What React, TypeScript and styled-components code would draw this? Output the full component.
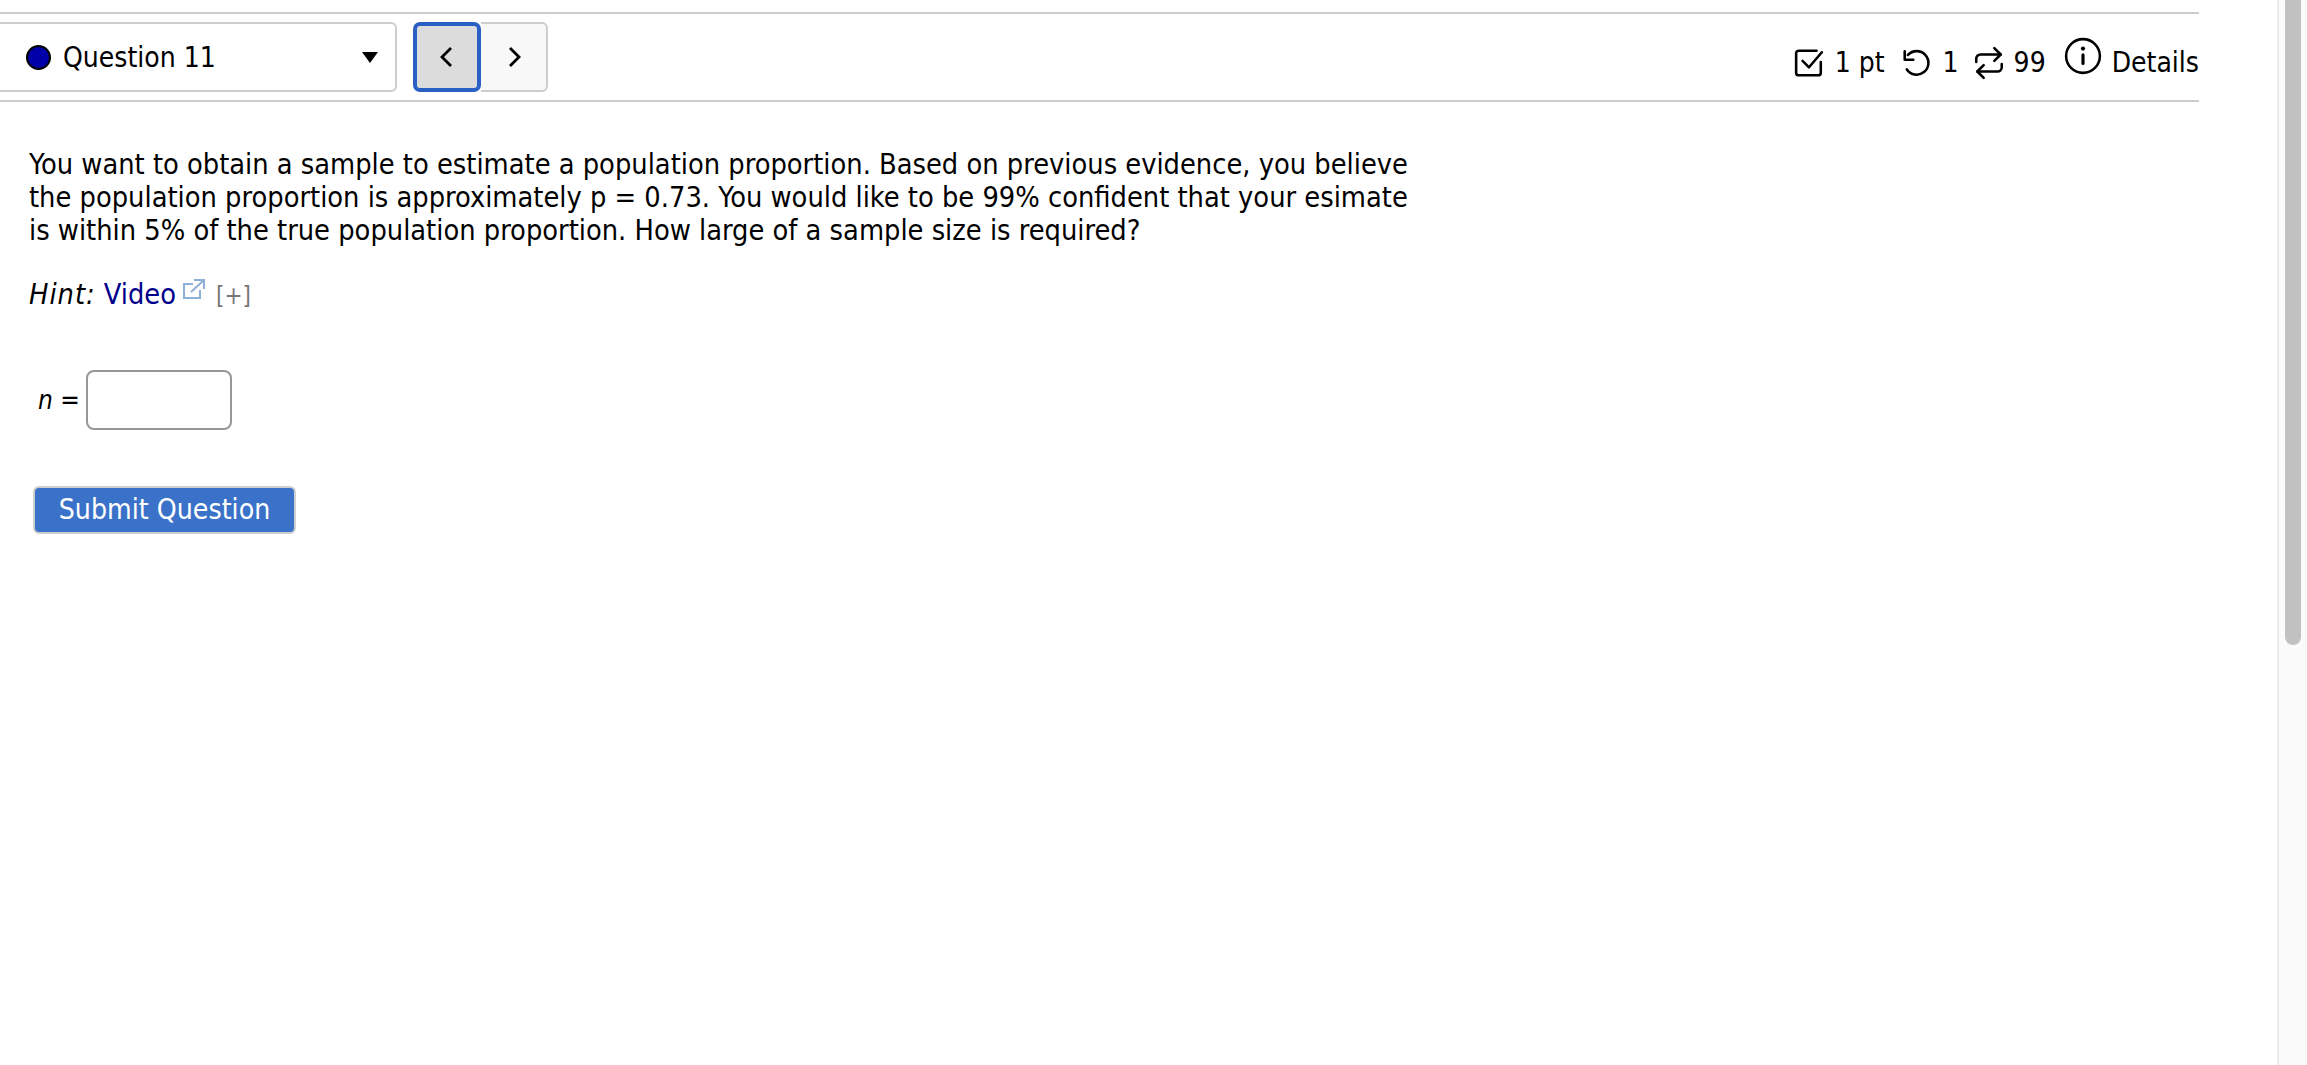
import React from 'react'
import styled, { createGlobalStyle } from 'styled-components'

const GlobalStyle = createGlobalStyle`
  html, body {
    margin: 0;
    padding: 0;
    background: #fff;
    overflow: hidden;
  }
  body {
    font-family: "DejaVu Sans Condensed", "DejaVu Sans", sans-serif;
    color: #000;
  }
`

const Page = styled.div`
  display: flex;
  height: 1065px;
  width: 2307px;
`

const Main = styled.main`
  width: 2199px;
  padding-top: 12px;
  box-sizing: border-box;
`

const Gutter = styled.div`
  flex: 1;
`

const Scrollbar = styled.div`
  width: 30px;
  height: 100%;
  box-sizing: border-box;
  background: #fafafa;
  border-left: 2px solid #eaeaea;
  padding: 0 6px 0 6px;
`

const ScrollThumb = styled.div`
  height: 645px;
  background: #c1c1c1;
  border-radius: 0 0 8px 8px;
`

const Toolbar = styled.div`
  display: flex;
  align-items: center;
  justify-content: space-between;
  height: 90px;
  box-sizing: border-box;
  border-top: 2px solid #cdcdcd;
  border-bottom: 2px solid #cdcdcd;
`

const NavGroup = styled.div`
  display: flex;
  align-items: center;
`

const QuestionSelect = styled.div`
  display: flex;
  align-items: center;
  width: 398px;
  height: 70px;
  box-sizing: border-box;
  margin-left: -1px;
  padding: 0 17px 0 27px;
  background: #fff;
  border: 2px solid #cdcdcd;
  border-left: none;
  border-radius: 0 6px 6px 0;
  font-size: 28px;
`

const StatusDot = styled.span`
  width: 25px;
  height: 25px;
  box-sizing: border-box;
  border-radius: 50%;
  background: #0000a8;
  border: 2px solid #000;
  margin-right: 12px;
`

const SelectLabel = styled.span`
  flex: 1;
  padding-top: 1px;
`

const Caret = styled.span`
  width: 0;
  height: 0;
  border-left: 8px solid transparent;
  border-right: 8px solid transparent;
  border-top: 11px solid #000;
`

const NavButton = styled.button<{ $active?: boolean }>`
  display: flex;
  align-items: center;
  justify-content: center;
  height: 70px;
  padding: 0;
  width: ${p => (p.$active ? '68px' : '67px')};
  margin-left: ${p => (p.$active ? '16px' : '0')};
  box-sizing: border-box;
  background: ${p => (p.$active ? '#dcdcdc' : '#f8f8f8')};
  border: ${p => (p.$active ? '4px solid #2a5fc4' : '2px solid #cdcdcd')};
  border-left-width: ${p => (p.$active ? '4px' : '0')};
  border-radius: ${p => (p.$active ? '7px' : '0 6px 6px 0')};
`

const Meta = styled.div`
  display: flex;
  align-items: center;
  font-size: 28px;
  padding-top: 11px;
`

const MetaItem = styled.span<{ $gap: number; $iconGap: number }>`
  display: flex;
  align-items: center;
  gap: ${p => p.$iconGap}px;
  margin-left: ${p => p.$gap}px;
`

const DetailsIcon = styled.svg`
  margin-top: -14px;
`

const Content = styled.div`
  padding: 46px 0 0 29px;
  font-size: 28.7px;
  line-height: 33px;
`

const Prompt = styled.p`
  margin: 0;
  width: 1390px;
`

const Hint = styled.p`
  margin: 31px 0 0;
  display: flex;
  align-items: baseline;
`

const HintLabel = styled.em`
  margin-right: 8px;
  letter-spacing: 1px;
`

const VideoLink = styled.a`
  color: #00008b;
  text-decoration: none;
`

const ExternalIcon = styled.svg`
  margin: 0 10px 0 6px;
  align-self: flex-start;
`

const Expand = styled.span`
  color: #777;
  font-size: 24px;
`

const AnswerRow = styled.div`
  display: flex;
  align-items: center;
  margin: 57px 0 0 9px;
`

const AnswerLabel = styled.span`
  font-size: 26px;
  margin-right: 6px;
`

const VarName = styled.em``

const AnswerInput = styled.input`
  width: 146px;
  height: 60px;
  box-sizing: border-box;
  border: 2px solid #979797;
  border-radius: 8px;
  background: #fff;
  outline: none;
`

const SubmitButton = styled.button`
  display: block;
  margin: 56px 0 0 4px;
  width: 263px;
  height: 48px;
  box-sizing: border-box;
  background: #3b72c9;
  color: #fff;
  border: 2px solid #cfcfcf;
  border-radius: 6px;
  font: inherit;
  font-size: 28.2px;
  line-height: 1;
  padding: 1px 0 0;
`

const Chevron = ({ flip }: { flip?: boolean }) => (
  <svg width="14" height="22" viewBox="0 0 14 22" fill="none" stroke="#000" strokeWidth="2.8">
    <path d={flip ? 'M3 2l9 9-9 9' : 'M11 2l-9 9 9 9'} />
  </svg>
)

const stroke = { fill: 'none', stroke: '#000', strokeWidth: 2.4, strokeLinecap: 'round', strokeLinejoin: 'round' } as const

export default function App() {
  return (
    <Page>
      <GlobalStyle />
      <Main>
        <Toolbar>
          <NavGroup>
            <QuestionSelect>
              <StatusDot />
              <SelectLabel>Question 11</SelectLabel>
              <Caret />
            </QuestionSelect>
            <NavButton $active aria-label="Previous">
              <Chevron />
            </NavButton>
            <NavButton aria-label="Next">
              <Chevron flip />
            </NavButton>
          </NavGroup>
          <Meta>
            <MetaItem $gap={0} $iconGap={11}>
              <svg width="30" height="30" viewBox="0 0 28 28" {...stroke}>
                <path d="M25 13v10a2.500 2.500 0 0 1-2.500 2.500h-18A2.500 2.500 0 0 1 2 23V5a2.500 2.500 0 0 1 2.500-2.500H21" />
                <path d="M8 12l6 6L26 4" />
              </svg>
              1 pt
            </MetaItem>
            <MetaItem $gap={16} $iconGap={11}>
              <svg width="31" height="30" viewBox="0 0 28 28" {...stroke}>
                <path d="M3 3v8h8" />
                <path d="M6 6.500A11 11 0 1 1 5 20" />
              </svg>
              1
            </MetaItem>
            <MetaItem $gap={15} $iconGap={10}>
              <svg width="30" height="34" viewBox="0 0 28 32" {...stroke}>
                <path d="M19 2l6 6-6 6" />
                <path d="M25 8H6a4 4 0 0 0-4 4v3" />
                <path d="M9 30l-6-6 6-6" />
                <path d="M3 24h19a4 4 0 0 0 4-4v-3" />
              </svg>
              99
            </MetaItem>
            <MetaItem $gap={18} $iconGap={10}>
              <DetailsIcon width="38" height="38" viewBox="0 0 36 36" {...stroke}>
                <circle cx="18" cy="18" r="16" />
                <path d="M18 17v8" strokeWidth="3" />
                <path d="M18 11h.01" strokeWidth="4" />
              </DetailsIcon>
              Details
            </MetaItem>
          </Meta>
        </Toolbar>
        <Content>
          <Prompt>
            You want to obtain a sample to estimate a population proportion. Based on previous evidence, you believe
            the population proportion is approximately p = 0.73. You would like to be 99% confident that your esimate
            is within 5% of the true population proportion. How large of a sample size is required?
          </Prompt>
          <Hint>
            <HintLabel>Hint:</HintLabel>
            <VideoLink>Video</VideoLink>
            <ExternalIcon width="24" height="24" viewBox="0 0 24 24" fill="none" stroke="#8fb0d6" strokeWidth="2">
              <path d="M11 6H2v14h16v-8" />
              <path d="M12 2h10v9M22 2L9 14" />
            </ExternalIcon>
            <Expand>[+]</Expand>
          </Hint>
          <AnswerRow>
            <AnswerLabel>
              <VarName>n</VarName> =
            </AnswerLabel>
            <AnswerInput />
          </AnswerRow>
          <SubmitButton>Submit Question</SubmitButton>
        </Content>
      </Main>
      <Gutter />
      <Scrollbar>
        <ScrollThumb />
      </Scrollbar>
    </Page>
  )
}
